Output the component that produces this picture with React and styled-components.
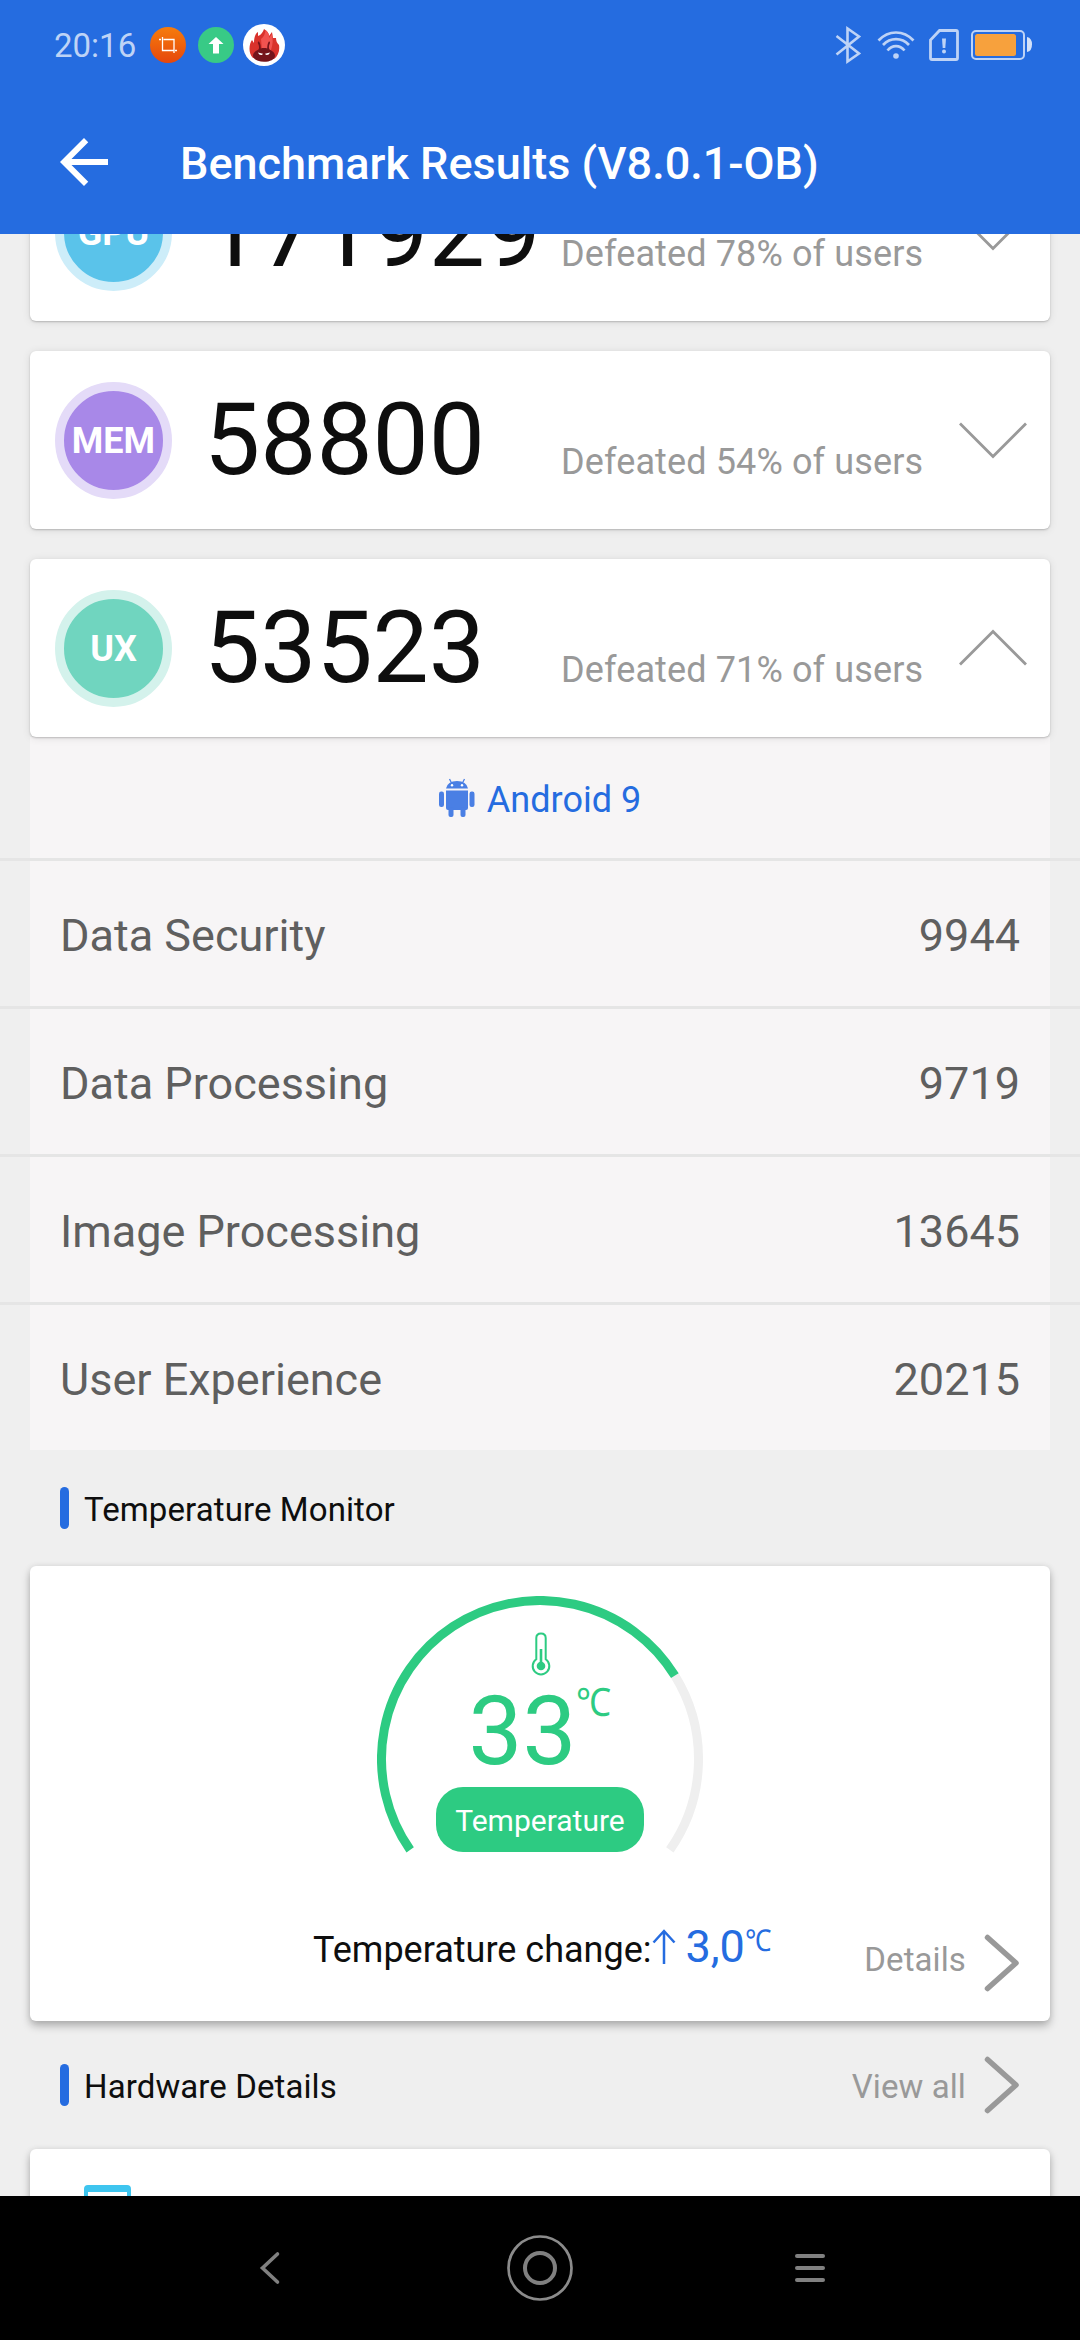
import styled, { createGlobalStyle } from "styled-components";

const scores = [
  { id: "gpu", label: "GPU", score: "171929", percent: 78, color: "#5ac3ea", ring: "#cdedf9" },
  { id: "mem", label: "MEM", score: "58800", percent: 54, color: "#a888e8", ring: "#e4dbf8" },
  { id: "ux", label: "UX", score: "53523", percent: 71, color: "#70d5bf", ring: "#d4f2ec", open: true },
];

const uxDetails = [
  { name: "Data Security", value: 9944 },
  { name: "Data Processing", value: 9719 },
  { name: "Image Processing", value: 13645 },
  { name: "User Experience", value: 20215 },
];

// point on the gauge circle, angle in degrees, clockwise from 3 o'clock
const gaugePoint = (angle) => {
  const rad = (angle * Math.PI) / 180;
  return `${163 + 158.5 * Math.cos(rad)} ${163 + 158.5 * Math.sin(rad)}`;
};

const GaugeArc = ({ from, to, color }) => (
  <path
    d={`M${gaugePoint(from)}A158.5 158.5 0 ${to - from > 180 ? 1 : 0} 1 ${gaugePoint(to)}`}
    fill="none"
    stroke={color}
    strokeWidth="9"
  />
);

const StatusBar = () => (
  <Status>
    <div className="left">
      <Clock>20:16</Clock>
      <svg className="crop" width="36" height="36" viewBox="0 0 36 36">
        <defs>
          <linearGradient id="orange" x1="0" y1="0" x2="0" y2="1">
            <stop offset="0" stopColor="#f67c0c" />
            <stop offset="1" stopColor="#e6470c" />
          </linearGradient>
        </defs>
        <circle cx="18" cy="18" r="18" fill="url(#orange)" />
        <path d="M9 12.500h2M12.500 10v13.500H24M13.500 12.500h10.500v13.500M25 23.500h2" fill="none" stroke="#fff" strokeWidth="1.300" />
      </svg>
      <svg className="upload" width="36" height="36" viewBox="0 0 36 36">
        <circle cx="18" cy="18" r="18" fill="#38ca86" />
        <path d="M18 10l7.500 7h-4.500v9.500h-6V17h-4.500z" fill="#fff" />
      </svg>
      <svg className="antutu" width="42" height="42" viewBox="0 0 42 42">
        <circle cx="21" cy="21" r="21" fill="#fff" />
        <path
          d="M10 34C5 29 6 20 9 16l2 3c0-5 1-9 4-11v4c3-1 5-4 6-7 3 2 5 4 5 7l3-4 1 6 3 0c0 3 1 5 3 7 1 6-1 11-5 14z"
          fill="#d9322c"
        />
        <path d="M18 15c3-2 4-5 4.500-9 3 2 4 5 3.500 8l3-4c1 6 1 10-1 16h-9z" fill="#f15350" />
        <path
          d="M15.500 25.500c1-2 .5-4-.5-6-.6-2 .5-2.500 1.300-1.500 1.300 2 1.400 4 1.500 6.500 2-.6 4.400-.6 6.400 0 .1-2.500.3-4.500 1.300-6.500.8-1 1.900-.5 1.300 1.500-1 2-1.300 4-.3 6 3 1.400 5.500 3.500 5.500 6 0 4-5 6.300-11 6.300s-11-2.300-11-6.300c0-2.500 2.500-4.600 5.500-6z"
          fill="#74141b"
        />
        <path d="M15 28.500l5 1.300c-1 2-4 1.500-5-1.300zM27 28.500l-5 1.300c1 2 4 1.500 5-1.300z" fill="#fff" />
      </svg>
    </div>
    <div className="right">
      <svg className="bluetooth" width="28" height="38" viewBox="0 0 28 38">
        <path d="M2.500 10L25 27.500 13.500 35.500V2.500L25 10.500 2.500 28.500" fill="none" stroke="#bed3f6" strokeWidth="2.600" />
      </svg>
      <svg className="wifi" width="38" height="30" viewBox="0 0 38 30">
        <g fill="none" stroke="#bed3f6" strokeWidth="2.700">
          <path d="M1.500 10.500Q9 2.500 19 2.500t17.500 8" />
          <path d="M6 15Q11.500 9.200 19 9.200T32 15" />
          <path d="M10.500 20.500Q14 16.200 19 16.200t8.500 4.300" />
        </g>
        <circle cx="19" cy="26" r="2.800" fill="#bed3f6" />
      </svg>
      <svg className="sim" width="30" height="32" viewBox="0 0 30 32">
        <path d="M10.500 1.500h16.500q1.500 0 1.500 1.500v26q0 1.500-1.500 1.500H3q-1.500 0-1.500-1.500V11z" fill="none" stroke="#bed3f6" strokeWidth="2.800" />
        <path d="M13 9.500h4l-.7 9.500h-2.600z" fill="#bed3f6" />
        <circle cx="15" cy="22.500" r="2" fill="#bed3f6" />
      </svg>
      <svg className="battery" width="62" height="30" viewBox="0 0 62 30">
        <rect x="1" y="1" width="52" height="28" rx="4" fill="none" stroke="#bed3f6" strokeWidth="2" />
        <rect x="4" y="4" width="41" height="22" rx="2.500" fill="#f7a13d" />
        <path d="M56 7q5 1 5 7.500T56 22z" fill="#d3e1f9" />
      </svg>
    </div>
  </Status>
);

const ScoreRow = ({ label, score, percent, color, ring, open }) => (
  <ScoreCard>
    <Badge $color={color} $ring={ring}>{label}</Badge>
    <div className="numbers">
      <span className="score">{score}</span>
      <span className="defeated">Defeated {percent}% of users</span>
    </div>
    <svg width="70" height="38" viewBox="0 0 70 38">
      <path
        d={open ? "M2 35.500L35 2.500l33 33" : "M2 2.500l33 33 33-33"}
        fill="none"
        stroke="#999"
        strokeWidth="2.800"
      />
    </svg>
  </ScoreCard>
);

const More = ({ children, shift }) => (
  <MoreLink $shift={shift}>
    <span>{children}</span>
    <svg width="36" height="58" viewBox="0 0 36 58">
      <path d="M3.500 3.500L32 29 3.500 54.500" fill="none" stroke="#999" strokeWidth="5.500" strokeLinecap="round" strokeLinejoin="round" />
    </svg>
  </MoreLink>
);

export default function App() {
  return (
    <Screen>
      <GlobalStyle />
      <Header>
        <StatusBar />
        <TitleBar>
          <svg width="72" height="72" viewBox="0 0 24 24">
            <path d="M20 11H7.830l5.590-5.590L12 4l-8 8 8 8 1.410-1.410L7.830 13H20v-2z" fill="#fff" />
          </svg>
          <h1>Benchmark Results (V8.0.1-OB)</h1>
        </TitleBar>
      </Header>

      <Content>
        <ScoreList>
          {scores.map((item) => (
            <ScoreRow key={item.id} {...item} />
          ))}
        </ScoreList>

        <Details>
          <AndroidVersion>
            <svg width="36" height="40" viewBox="0 0 36 40">
              <g fill="#4a7fe4">
                <path d="M7 10.500Q8.500 3 18 3t11 7.500z" />
                <path d="M7 12.500h22V30q0 2-2 2H9q-2 0-2-2z" />
                <rect x="0" y="13.500" width="5" height="15.500" rx="2.200" />
                <rect x="30.500" y="13.500" width="5" height="15.500" rx="2.200" />
                <rect x="9.500" y="29" width="5" height="10" rx="2" />
                <rect x="21.500" y="29" width="5" height="10" rx="2" />
              </g>
              <path d="M10.500 1l2.300 4.500M25.500 1l-2.300 4.500" stroke="#4a7fe4" strokeWidth="1.300" />
              <circle cx="13" cy="7.200" r="1.200" fill="#fff" />
              <circle cx="23" cy="7.200" r="1.200" fill="#fff" />
            </svg>
            <span>Android 9</span>
          </AndroidVersion>
          {uxDetails.map(({ name, value }) => (
            <DetailRow key={name}>
              <div className="inner">
                <span>{name}</span>
                <span>{value}</span>
              </div>
            </DetailRow>
          ))}
        </Details>

        <SectionTitle $height={116}>
          <h2>Temperature Monitor</h2>
        </SectionTitle>

        <TemperatureCard>
          <Gauge>
            <svg className="arc" width="326" height="260" viewBox="0 0 326 260">
              <GaugeArc from={328.3} to={395} color="#efefef" />
              <GaugeArc from={145} to={328.3} color="#2dcb82" />
            </svg>
            <svg className="thermometer" width="20" height="44" viewBox="0 0 20 44">
              <path
                d="M5.300 27.300V6Q5.300 1.500 10 1.500T14.700 6v21.300a8.300 8.300 0 1 1-9.400 0z"
                fill="none"
                stroke="#2dcb82"
                strokeWidth="2"
              />
              <path d="M10 17v17" stroke="#2dcb82" strokeWidth="2.600" />
              <circle cx="10" cy="34" r="4.300" fill="#2dcb82" />
            </svg>
            <div className="reading">
              33<sup>℃</sup>
            </div>
            <div className="pill">Temperature</div>
          </Gauge>
          <div className="footer">
            <Change>
              <span>Temperature change:</span>
              <svg width="24" height="36" viewBox="0 0 24 36">
                <path d="M12 35V2M1.500 13.500L12 2l10.500 11.500" fill="none" stroke="#256ce0" strokeWidth="2.500" />
              </svg>
              <span className="delta">3,0</span>
              <span className="unit">℃</span>
            </Change>
            <More shift={-8}>Details</More>
          </div>
        </TemperatureCard>

        <SectionTitle $height={128}>
          <h2>Hardware Details</h2>
          <More shift={3}>View all</More>
        </SectionTitle>

        <HardwareCard>
          <div className="device" />
        </HardwareCard>
      </Content>

      <NavBar>
        <svg width="36" height="36" viewBox="0 0 36 36">
          <path d="M25.500 4L10.500 18l15 14" fill="none" stroke="#808080" strokeWidth="3.600" strokeLinecap="round" />
        </svg>
        <svg width="66" height="66" viewBox="0 0 66 66" fill="none">
          <circle cx="33" cy="33" r="31.500" stroke="#8b8b8b" strokeWidth="2.700" />
          <circle cx="33" cy="33" r="15" stroke="#808080" strokeWidth="4" />
        </svg>
        <svg width="30" height="30" viewBox="0 0 30 30" fill="#808080">
          <rect y="1" width="30" height="4" rx="2" />
          <rect y="13" width="30" height="4" rx="2" />
          <rect y="25" width="30" height="4" rx="2" />
        </svg>
      </NavBar>
    </Screen>
  );
}

const GlobalStyle = createGlobalStyle`
  * {
    box-sizing: border-box;
  }
  body {
    margin: 0;
    font-family: Roboto, "Noto Sans", sans-serif;
  }
  h1, h2 {
    margin: 0;
    font-weight: 400;
  }
  svg {
    display: block;
    flex-shrink: 0;
  }
`;

const Screen = styled.div`
  width: 1080px;
  height: 2340px;
  display: flex;
  flex-direction: column;
  overflow: hidden;
  background-color: #efefef;
`;

const Header = styled.header`
  flex-shrink: 0;
  height: 234px;
  background-color: #256ce0;
`;

const Status = styled.div`
  height: 90px;
  padding: 0 47px 0 54px;
  display: flex;
  align-items: center;
  justify-content: space-between;
  .left,
  .right {
    display: flex;
    align-items: center;
  }
  .upload {
    margin-left: 12px;
  }
  .antutu {
    margin-left: 9px;
  }
  .wifi {
    margin-left: 15px;
  }
  .sim {
    margin-left: 14px;
  }
  .battery {
    margin-left: 12px;
  }
`;

const Clock = styled.span`
  width: 96px;
  padding-top: 2px;
  color: #bed3f6;
  font-size: 33px;
  line-height: 40px;
`;

const TitleBar = styled.div`
  height: 144px;
  padding-left: 48px;
  display: flex;
  align-items: center;
  gap: 60px;
  h1 {
    color: #fff;
    font-size: 45px;
    font-weight: 500;
    line-height: 52px;
    padding-top: 3px;
  }
`;

const Content = styled.main`
  flex: 1;
  min-height: 0;
  overflow: hidden;
`;

/* the list is scrolled, its first card is partly under the header */
const ScoreList = styled.div`
  margin: -91px 30px 0;
  display: flex;
  flex-direction: column;
  gap: 30px;
`;

const Card = styled.div`
  background-color: #fff;
  border-radius: 6px;
`;

const ScoreCard = styled(Card)`
  position: relative;
  z-index: 1;
  height: 178px;
  padding: 0 22px 0 25px;
  display: flex;
  align-items: center;
  box-shadow: 0 1px 2px rgba(0, 0, 0, 0.2), 0 1px 8px rgba(0, 0, 0, 0.1);
  .numbers {
    flex: 1;
    margin-left: 32px;
    display: flex;
    align-items: baseline;
  }
  .score {
    width: 357px;
    color: #0e0e0e;
    font-size: 100px;
    line-height: 118px;
  }
  .defeated {
    color: #999;
    font-size: 36px;
    letter-spacing: 0.12px;
    white-space: nowrap;
  }
`;

const Badge = styled.div`
  width: 117px;
  height: 117px;
  padding-top: 1px;
  border: 9px solid ${({ $ring }) => $ring};
  border-radius: 50%;
  background-color: ${({ $color }) => $color};
  color: #fff;
  font-size: 36px;
  font-weight: 700;
  display: flex;
  align-items: center;
  justify-content: center;
`;

const Details = styled.section`
  color: #5f5f5f;
`;

const AndroidVersion = styled.div`
  height: 121px;
  margin: 0 30px;
  display: flex;
  align-items: center;
  justify-content: center;
  gap: 12px;
  background-color: #f7f5f6;
  color: #256ce0;
  font-size: 36px;
  span {
    padding-top: 4px;
  }
`;

const DetailRow = styled.div`
  border-top: 3px solid #e5e5e5;
  .inner {
    height: 145px;
    margin: 0 30px;
    padding: 3px 30px 0;
    display: flex;
    align-items: center;
    justify-content: space-between;
    background-color: #f7f5f6;
    font-size: 45px;
  }
`;

const SectionTitle = styled.div`
  height: ${({ $height }) => $height}px;
  padding: 0 60px;
  display: flex;
  align-items: center;
  justify-content: space-between;
  h2 {
    padding-top: 3px;
    display: flex;
    align-items: center;
    gap: 15px;
    color: #0e0e0e;
    font-size: 33px;
    letter-spacing: 0.1px;
  }
  h2::before {
    content: "";
    width: 9px;
    height: 42px;
    margin-top: -3px;
    border-radius: 5px;
    background-color: #256ce0;
  }
`;

const MoreLink = styled.div`
  display: flex;
  align-items: center;
  gap: 18px;
  color: #999;
  font-size: 33px;
  letter-spacing: 0.1px;
  span {
    margin-top: ${({ $shift }) => $shift}px;
  }
`;

const TemperatureCard = styled(Card)`
  height: 455px;
  margin: 0 30px;
  padding-top: 30px;
  box-shadow: 0 5px 9px rgba(0, 0, 0, 0.26), 0 0 6px rgba(0, 0, 0, 0.08);
  .footer {
    margin-top: 78px;
    padding-right: 30px;
    display: grid;
    grid-template-columns: 283px 1fr auto;
    align-items: start;
  }
`;

const Gauge = styled.div`
  width: 326px;
  height: 260px;
  margin: 0 auto;
  display: grid;
  grid-template-rows: 80px 111px 65px;
  justify-items: center;
  .arc {
    grid-area: 1 / 1 / 4 / 2;
  }
  .thermometer {
    grid-area: 1 / 1;
    align-self: end;
    margin-left: 1px;
  }
  .reading {
    grid-area: 2 / 1;
    position: relative;
    margin-right: 35px;
    color: #2dcb82;
    font-size: 96px;
    line-height: 110px;
  }
  .reading sup {
    position: absolute;
    left: 100%;
    top: 4px;
    font-size: 39px;
    line-height: 46px;
    transform: scaleX(0.9);
    transform-origin: left;
  }
  .pill {
    grid-area: 3 / 1;
    width: 208px;
    height: 65px;
    border-radius: 27px;
    background-color: #2dcb82;
    color: #fff;
    font-size: 30px;
    line-height: 68px;
    text-align: center;
  }
`;

const Change = styled.div`
  grid-column: 2;
  margin-top: -13px;
  display: flex;
  align-items: baseline;
  color: #0e0e0e;
  font-size: 36px;
  line-height: 52px;
  white-space: nowrap;
  svg {
    margin: 8px 9px 0 1px;
    align-self: flex-start;
  }
  .delta {
    color: #256ce0;
    font-size: 45px;
  }
  .unit {
    align-self: flex-start;
    margin-top: 5px;
    color: #256ce0;
    font-size: 30px;
    line-height: 30px;
    transform: scaleX(0.88);
    transform-origin: left;
  }
`;

const HardwareCard = styled(Card)`
  height: 300px;
  margin: 0 30px;
  padding: 36px 54px;
  box-shadow: 0 5px 9px rgba(0, 0, 0, 0.26), 0 0 6px rgba(0, 0, 0, 0.08);
  .device {
    width: 47px;
    height: 80px;
    border: 4px solid #3ec5ef;
    border-top-width: 7px;
    border-radius: 4px;
  }
`;

const NavBar = styled.nav`
  position: relative;
  z-index: 2;
  flex-shrink: 0;
  height: 144px;
  padding: 0 135px;
  display: grid;
  grid-template-columns: repeat(3, 1fr);
  place-items: center;
  background-color: #000;
`;
